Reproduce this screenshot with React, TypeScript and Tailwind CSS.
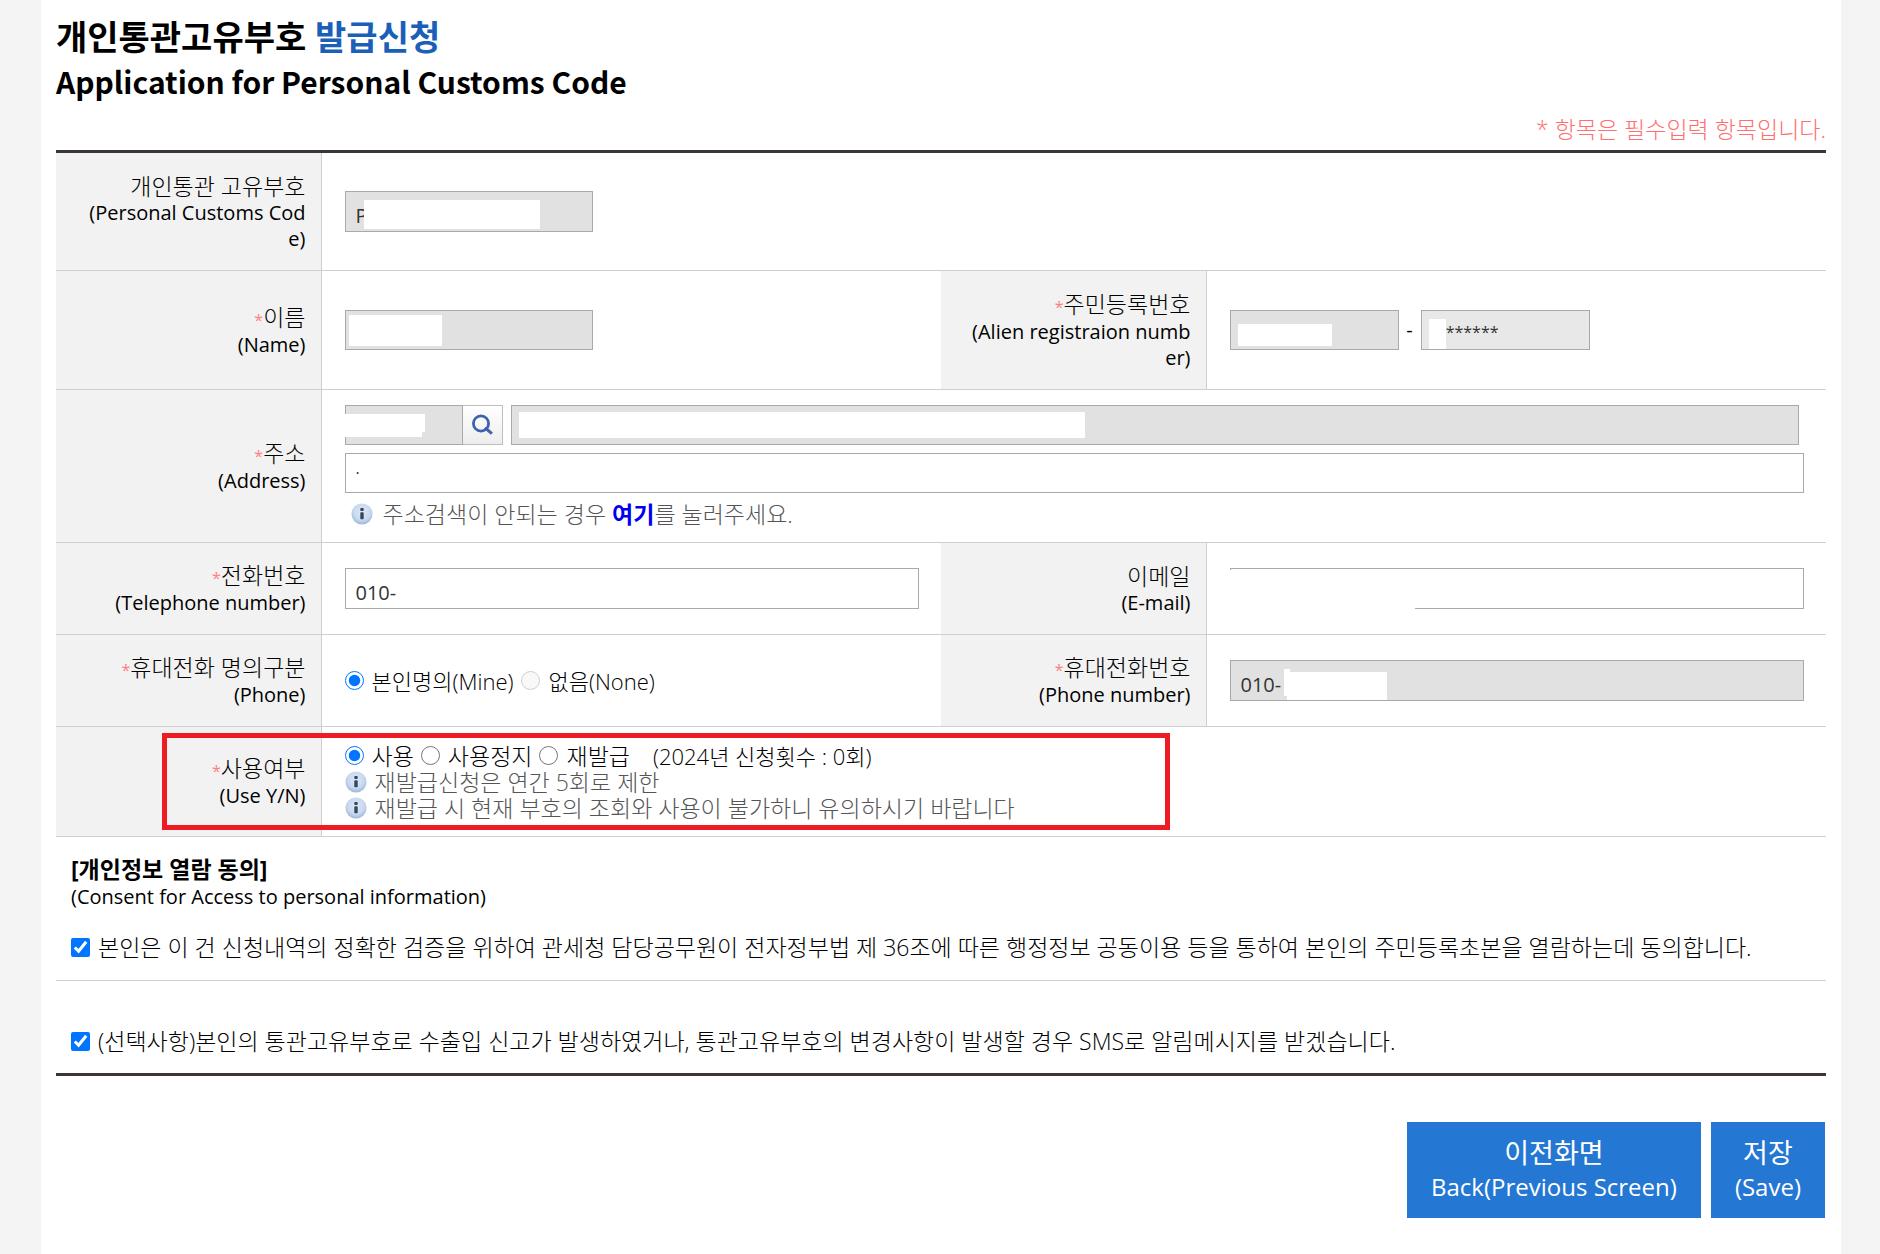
import React from 'react'

type LabelProps = {
  ko: string
  en: string
  required?: boolean
  htmlFor?: string
}

const inputBase = 'block border border-[#a9a9a9] px-2.5 text-[#333] outline-none'
const readOnlyBg = 'bg-[#e1e1e1]'

const Label = ({ ko, en, required, htmlFor }: LabelProps) => (
  <th
    scope="row"
    className="border-r border-b border-[#cfcfcf] bg-[#f2f2f2] pr-[15px] pl-7 text-right align-middle font-light break-all"
  >
    <label htmlFor={htmlFor} className="block">
      <span className="block text-[23px] leading-7">
        {required && <span className="text-base font-normal text-[#ff7f7f]">*</span>}
        {ko}
      </span>
      <span className="block text-xl leading-[26px] font-normal">{en}</span>
    </label>
  </th>
)

const Cell = ({ children, colSpan }: { children: React.ReactNode; colSpan?: number }) => (
  <td colSpan={colSpan} className="relative border-b border-[#cfcfcf] pr-[22px] pl-[23px] align-middle">
    {children}
  </td>
)

const InfoIcon = () => (
  <svg aria-hidden="true" viewBox="0 0 22 22" className="h-[22px] w-[22px] shrink-0">
    <defs>
      <radialGradient id="info-bg" cx="50%" cy="40%" r="60%">
        <stop offset="0" stopColor="#dde8f6" />
        <stop offset="0.65" stopColor="#c9d9ee" />
        <stop offset="1" stopColor="#9db6dc" />
      </radialGradient>
    </defs>
    <circle cx="11" cy="11" r="10.5" fill="url(#info-bg)" />
    <rect x="9.3" y="5" width="3.4" height="3" rx="0.8" fill="#35465f" />
    <rect x="9.3" y="9.2" width="3.4" height="7" rx="0.8" fill="#35465f" />
  </svg>
)

const Radio = ({
  name,
  label,
  checked,
  disabled,
}: {
  name: string
  label: string
  checked?: boolean
  disabled?: boolean
}) => (
  <label className="flex items-center gap-2">
    <input
      type="radio"
      name={name}
      defaultChecked={checked}
      disabled={disabled}
      className="h-[19px] w-[19px] accent-[#0075ff]"
    />
    <span>{label}</span>
  </label>
)

const App = () => {
  return (
    <div className="min-h-screen bg-[#f4f4f4] pr-[39px] pl-[41px] font-['Open_Sans','Noto_Sans_CJK_KR',sans-serif] text-black">
      <main className="min-h-screen bg-white pt-[15px] pr-[15px] pl-[15px]">
        <h1 className="text-[34px] leading-[44px] font-bold">
          개인통관고유부호 <span className="text-[#1a5fb8]">발급신청</span>
          <span className="block font-['Noto_Sans_CJK_KR',sans-serif] text-[30px]">
            Application for Personal Customs Code
          </span>
        </h1>
        <p className="mt-3 mb-[7px] text-right text-[23px] leading-7 font-light text-[#ff6f6f]">
          * 항목은 필수입력 항목입니다.
        </p>

        <form>
          <table className="w-full table-fixed border-separate border-spacing-0 border-y-[3px] border-[#3b3536]">
            <colgroup>
              <col className="w-[15%]" />
              <col className="w-[35%]" />
              <col className="w-[15%]" />
              <col className="w-[35%]" />
            </colgroup>
            <tbody>
              <tr className="h-[118px]">
                <Label ko="개인통관 고유부호" en="(Personal Customs Code)" htmlFor="code" />
                <Cell colSpan={3}>
                  <div className="relative w-[248px]">
                    <input
                      id="code"
                      readOnly
                      defaultValue="P"
                      className={`${inputBase} ${readOnlyBg} h-[41px] w-full pt-2 text-xl`}
                    />
                    <span className="absolute top-[9px] left-[19px] h-[29px] w-44 bg-white" />
                  </div>
                </Cell>
              </tr>
              <tr className="h-[119px]">
                <Label ko="이름" en="(Name)" required htmlFor="name" />
                <Cell>
                  <div className="relative w-[248px]">
                    <input id="name" readOnly className={`${inputBase} ${readOnlyBg} h-10 w-full`} />
                    <span className="absolute top-[5px] left-1 h-[31px] w-[93px] bg-white" />
                  </div>
                </Cell>
                <Label ko="주민등록번호" en="(Alien registraion number)" required htmlFor="arn" />
                <Cell>
                  <div className="flex items-center">
                    <div className="relative w-[169px]">
                      <input id="arn" readOnly className={`${inputBase} ${readOnlyBg} h-10 w-full`} />
                      <span className="absolute top-3.5 left-2 h-[22px] w-[94px] bg-white" />
                    </div>
                    <span className="w-[22px] text-center text-xl">-</span>
                    <div className="relative w-[169px]">
                      <input
                        aria-label="주민등록번호 뒷자리"
                        readOnly
                        defaultValue=" ******"
                        className={`${inputBase} h-10 w-full bg-[#e8e8e8] pt-1 pl-5 text-base`}
                      />
                      <span className="absolute top-[9px] left-2 h-[30px] w-[17px] bg-white" />
                    </div>
                  </div>
                </Cell>
              </tr>
              <tr className="h-[153px]">
                <Label ko="주소" en="(Address)" required htmlFor="address" />
                <Cell colSpan={3}>
                  <div className="flex pr-[5px]">
                    <div className="relative w-[118px]">
                      <input aria-label="우편번호" readOnly className={`${inputBase} ${readOnlyBg} h-10 w-full`} />
                      <span className="absolute top-[9px] left-0 h-[18px] w-20 bg-white" />
                      <span className="absolute top-[27px] left-0 h-[5px] w-[77px] bg-white" />
                    </div>
                    <button
                      type="button"
                      aria-label="주소 검색"
                      className="flex h-10 w-10 items-center justify-center border border-l-0 border-[#bdbdbd] bg-linear-to-b from-white to-[#ededed]"
                    >
                      <svg viewBox="0 0 22 22" className="h-[22px] w-[22px]" fill="none" stroke="#3f62ae">
                        <circle cx="10" cy="9.5" r="7.6" strokeWidth="2.8" />
                        <path d="M13.5 14.2l3.2 1.8 4.2 3.6" strokeWidth="3" />
                      </svg>
                    </button>
                    <div className="relative ml-2 flex-1">
                      <input aria-label="주소" readOnly className={`${inputBase} ${readOnlyBg} h-10 w-full`} />
                      <span className="absolute top-[7px] left-2 h-[26px] w-[566px] bg-white" />
                    </div>
                  </div>
                  <input id="address" defaultValue="·" className={`${inputBase} mt-2 h-10 w-full bg-white text-base`} />
                  <p className="mt-2 ml-1.5 flex items-center gap-2.5 text-[23px] leading-[26px] font-light text-[#555]">
                    <InfoIcon />
                    <span>
                      주소검색이 안되는 경우{' '}
                      <a href="#" className="font-bold text-[#0000ee]">
                        여기
                      </a>
                      를 눌러주세요.
                    </span>
                  </p>
                </Cell>
              </tr>
              <tr className="h-[92px]">
                <Label ko="전화번호" en="(Telephone number)" required htmlFor="tel" />
                <Cell>
                  <input id="tel" defaultValue="010-" className={`${inputBase} h-[41px] w-full bg-white pt-2 text-xl`} />
                </Cell>
                <Label ko="이메일" en="(E-mail)" htmlFor="email" />
                <Cell>
                  <div className="relative">
                    <input id="email" type="email" className={`${inputBase} h-[41px] w-full bg-white`} />
                    <span className="absolute top-0.5 left-0 h-10 w-[185px] bg-white" />
                  </div>
                </Cell>
              </tr>
              <tr className="h-[92px]">
                <Label ko="휴대전화 명의구분" en="(Phone)" required />
                <Cell>
                  <div className="flex gap-2 text-[22px] leading-[26px] font-light">
                    <Radio name="owner" label="본인명의(Mine)" checked />
                    <Radio name="owner" label="없음(None)" disabled />
                  </div>
                </Cell>
                <Label ko="휴대전화번호" en="(Phone number)" required htmlFor="mobile" />
                <Cell>
                  <div className="relative">
                    <input
                      id="mobile"
                      readOnly
                      defaultValue="010-"
                      className={`${inputBase} ${readOnlyBg} h-[41px] w-full pt-2 text-xl`}
                    />
                    <span className="absolute top-[9px] left-[54px] h-[27px] w-1.5 bg-white" />
                    <span className="absolute top-3 left-[57px] h-7 w-[100px] bg-white" />
                  </div>
                </Cell>
              </tr>
              <tr className="h-[110px]">
                <Label ko="사용여부" en="(Use Y/N)" required />
                <Cell colSpan={3}>
                  <div className="flex gap-[7px] text-[23px] leading-[26px] font-light">
                    <Radio name="use" label="사용" checked />
                    <Radio name="use" label="사용정지" />
                    <Radio name="use" label="재발급" />
                    <span className="ml-4 text-[22px]">(2024년 신청횟수 : 0회)</span>
                  </div>
                  <p className="flex items-center gap-2 text-[23px] leading-[26px] font-light text-[#555]">
                    <InfoIcon />
                    재발급신청은 연간 5회로 제한
                  </p>
                  <p className="flex items-center gap-2 text-[23px] leading-[26px] font-light text-[#555]">
                    <InfoIcon />
                    재발급 시 현재 부호의 조회와 사용이 불가하니 유의하시기 바랍니다
                  </p>
                  {/* highlight over the row */}
                  <span className="pointer-events-none absolute top-1.5 -left-40 z-10 h-[97px] w-[1008px] border-[5px] border-[#ed1c24]" />
                </Cell>
              </tr>
              <tr className="h-[144px]">
                <td colSpan={4} className="border-b border-[#cfcfcf] pl-[15px] align-middle">
                  <p className="text-[23px] leading-[27px] font-bold">[개인정보 열람 동의]</p>
                  <p className="text-xl leading-[27px]">(Consent for Access to personal information)</p>
                  <label className="mt-6 flex items-center gap-2 text-[23px] leading-[27px] font-light">
                    <input type="checkbox" defaultChecked className="h-[19px] w-[19px] accent-[#0075ff]" />
                    본인은 이 건 신청내역의 정확한 검증을 위하여 관세청 담당공무원이 전자정부법 제 36조에 따른 행정정보
                    공동이용 등을 통하여 본인의 주민등록초본을 열람하는데 동의합니다.
                  </label>
                </td>
              </tr>
              <tr className="h-[92px]">
                <td colSpan={4} className="pt-7 pl-[15px] align-middle">
                  <label className="flex items-center gap-2 text-[23px] leading-[27px] font-light">
                    <input type="checkbox" defaultChecked className="h-[19px] w-[19px] accent-[#0075ff]" />
                    (선택사항)본인의 통관고유부호로 수출입 신고가 발생하였거나, 통관고유부호의 변경사항이 발생할 경우
                    SMS로 알림메시지를 받겠습니다.
                  </label>
                </td>
              </tr>
            </tbody>
          </table>

          <div className="mt-[46px] flex justify-end gap-2.5 pr-px">
            <button type="button" className="h-24 bg-[#2477d2] px-6 leading-[34px] text-white">
              <span className="block text-[27px]">이전화면</span>
              <span className="block text-2xl leading-[34px]">Back(Previous Screen)</span>
            </button>
            <button type="submit" className="h-24 bg-[#2477d2] px-6 leading-[34px] text-white">
              <span className="block text-[27px]">저장</span>
              <span className="block text-2xl leading-[34px]">(Save)</span>
            </button>
          </div>
        </form>
      </main>
    </div>
  )
}

export default App
